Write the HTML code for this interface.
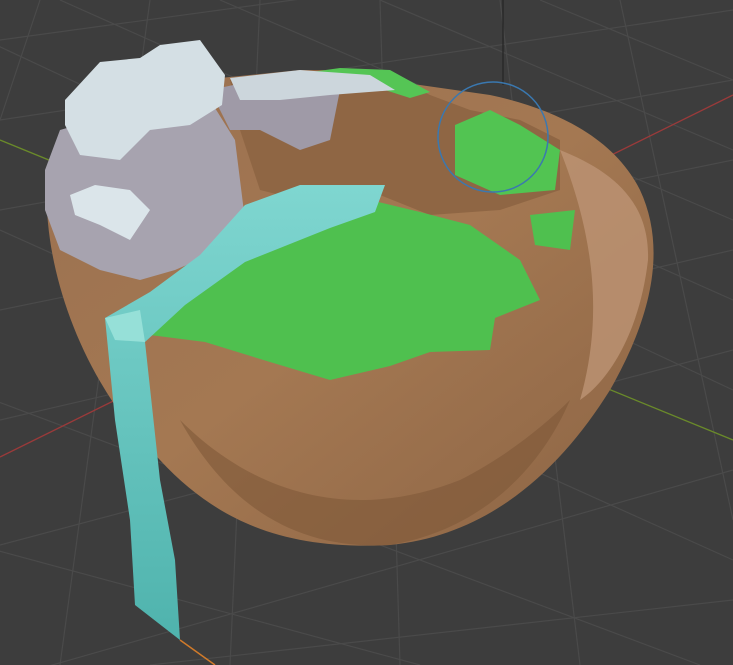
<!DOCTYPE html>
<html><head><style>html,body{margin:0;padding:0;background:#3d3d3d;overflow:hidden}svg{display:block}</style></head>
<body>
<svg width="733" height="665" viewBox="0 0 733 665" xmlns="http://www.w3.org/2000/svg">
<defs>
<linearGradient id="body" x1="0" y1="0" x2="1" y2="1">
<stop offset="0" stop-color="#9a7050"/><stop offset="0.5" stop-color="#a47852"/><stop offset="1" stop-color="#8c6444"/>
</linearGradient>
<linearGradient id="water" x1="0" y1="0" x2="0" y2="1">
<stop offset="0" stop-color="#7fd6d0"/><stop offset="1" stop-color="#4fb3ad"/>
</linearGradient>
</defs>
<rect width="733" height="665" fill="#3d3d3d"/>
<g stroke="#4a4a4a" stroke-width="1.2" fill="none">
<path d="M0,40 L733,-60 M0,120 L733,10 M0,210 L733,80 M0,310 L733,160 M0,420 L733,250 M0,545 L733,350 M0,680 L733,470 M150,665 L733,600"/>
<path d="M-100,0 L733,390 M60,0 L733,300 M220,0 L733,220 M380,0 L733,150 M540,0 L733,80 M-200,140 L733,560 M-300,290 L700,665 M-300,470 L420,665"/>
<path d="M40,0 L0,120 M150,0 L60,665 M260,0 L230,665 M380,0 L400,665 M500,0 L580,665 M620,0 L733,520"/>
</g>
<line x1="0" y1="457" x2="733" y2="95" stroke="#9a3a3a" stroke-width="1.3"/>
<line x1="0" y1="140" x2="733" y2="440" stroke="#6a8a2a" stroke-width="1.3"/>
<line x1="503" y1="0" x2="503" y2="85" stroke="#2a2a2a" stroke-width="1.5"/>
<line x1="180" y1="640" x2="215" y2="665" stroke="#d07a2a" stroke-width="1.5"/>
<path d="M48,165 C38,260 80,380 160,460 C220,525 290,550 390,545 C490,535 560,470 610,390 C650,320 668,250 640,190 C615,140 560,110 490,95 L420,85 L300,70 L200,80 Z" fill="url(#body)"/>
<path d="M560,150 C610,170 650,200 648,260 C640,330 610,380 580,400 C600,330 600,250 560,150 Z" fill="#bd9474" opacity="0.8"/>
<path d="M180,420 C260,500 360,520 460,480 C500,460 540,430 570,400 C540,470 480,530 390,545 C300,550 230,510 180,420 Z" fill="#7e5838" opacity="0.6"/>
<path d="M230,80 L300,70 L380,70 L430,95 L470,110 L520,120 L560,140 L560,190 L500,210 L430,215 L380,195 L300,200 L260,190 L240,130 Z" fill="#8f6644"/>
<path d="M150,335 L200,285 L245,245 L300,222 L370,200 L420,212 L470,225 L520,260 L540,300 L495,318 L490,350 L430,352 L390,366 L330,380 L270,362 L205,342 Z" fill="#4fc04f"/>
<path d="M455,125 L490,110 L520,125 L560,150 L555,190 L500,195 L455,175 Z" fill="#52c452"/>
<path d="M530,215 L575,210 L570,250 L535,245 Z" fill="#4fc04f"/>
<path d="M290,75 L340,68 L390,70 L430,92 L410,98 L360,82 Z" fill="#55c555"/>
<path d="M45,170 L60,130 L95,120 L150,110 L210,100 L235,140 L245,220 L210,255 L175,270 L140,280 L100,270 L60,250 L45,210 Z" fill="#a7a3af"/>
<path d="M210,90 L280,75 L340,90 L330,140 L300,150 L260,130 L230,130 Z" fill="#9f9aa7"/>
<path d="M65,100 L100,62 L140,58 L160,45 L200,40 L225,75 L222,105 L190,125 L150,130 L120,160 L80,155 L65,125 Z" fill="#d4dfe4"/>
<path d="M230,78 L300,70 L370,75 L395,90 L330,95 L280,100 L240,100 Z" fill="#ccd6dc"/>
<path d="M70,195 L95,185 L130,190 L150,210 L130,240 L100,225 L75,215 Z" fill="#dbe5ea"/>
<path d="M105,318 L150,292 L200,255 L245,205 L300,185 L385,185 L375,212 L330,228 L245,262 L185,305 L145,342 L160,480 L175,560 L180,640 L135,605 L130,520 L115,420 Z" fill="url(#water)"/>
<path d="M105,318 L140,310 L145,342 L115,340 Z" fill="#96e0d8"/>
<circle cx="493" cy="137" r="55" fill="none" stroke="#3a78b0" stroke-width="1.5"/>
</svg>
</body></html>
